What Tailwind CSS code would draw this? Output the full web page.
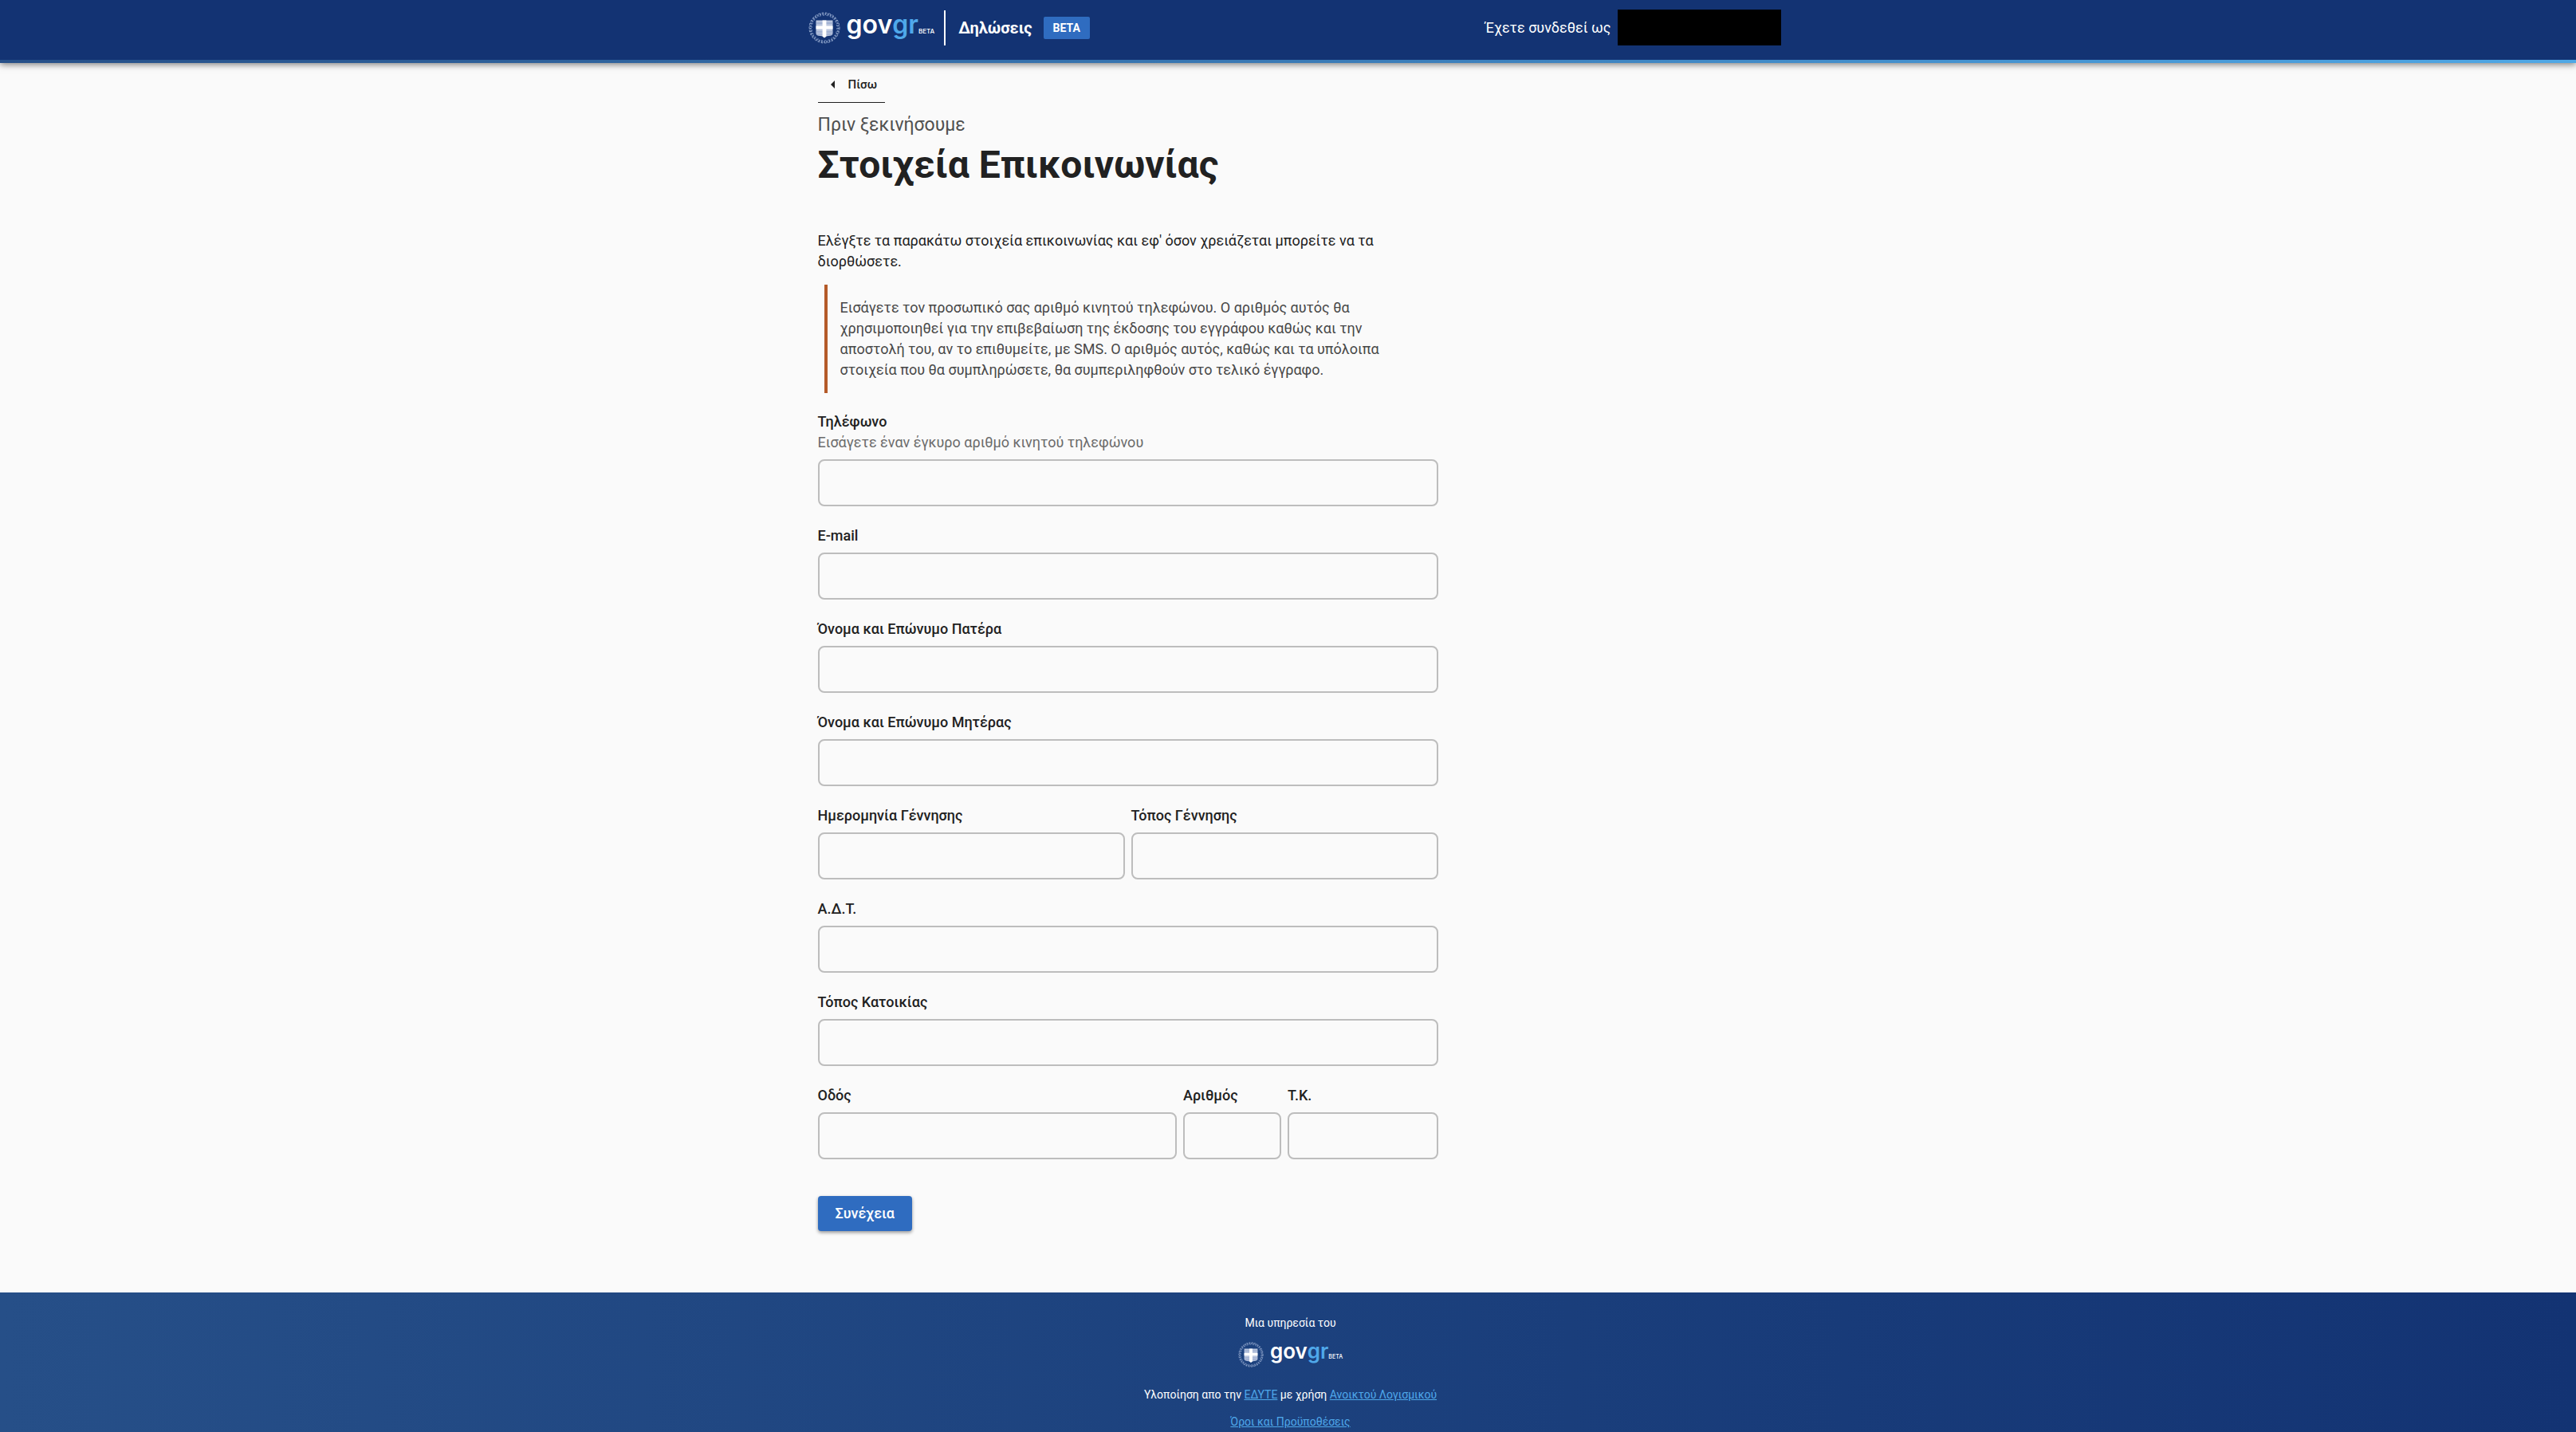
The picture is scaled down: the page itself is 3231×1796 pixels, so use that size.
<!DOCTYPE html>
<html lang="el">
<head>
<meta charset="utf-8">
<meta name="viewport" content="width=device-width, initial-scale=1">
<title>Στοιχεία Επικοινωνίας</title>
<script src="https://cdn.jsdelivr.net/npm/@tailwindcss/browser@4"></script>
</head>
<body class="flex min-h-screen flex-col bg-[#fafafa] font-['Roboto','Noto_Sans',sans-serif] text-lg leading-[26px] text-[#212121]">
<svg class="hidden" aria-hidden="true">
  <symbol id="emblem" viewBox="0 0 40 40">
    <circle cx="20" cy="20" r="17.5" fill="none" stroke="#7f96c0" stroke-width="2.600" stroke-dasharray="1.8 1.5"/>
    <circle cx="20" cy="20" r="19" fill="none" stroke="#8fa4ca" stroke-width="1" stroke-dasharray="2.500 2"/>
    <circle cx="20" cy="20" r="15.8" fill="none" stroke="#6f89b8" stroke-width="1" stroke-dasharray="2 2.500"/>
    <path d="M9.500 10.500h21V27c0 2-2 2.800-5 3l-3.500.5-2 1.500-2-1.500-3.500-.5c-3-.2-5-1-5-3z" fill="#b9c5de"/>
    <path d="M9.500 14h21M9.500 25h21M10 28h20" stroke="#8b9fc8" stroke-width="1"/>
    <path d="M17.600 10.500h4.800v7h8.100v4h-8.100v9.200L20 32.500l-2.400-1.800v-9.200H9.500v-4h8.100z" fill="#fff"/>
  </symbol>
</svg>

<header class="bg-[#133373] text-white shadow-[0_2px_8px_rgba(0,0,0,0.5)]">
  <div class="mx-auto flex h-[75px] max-w-[1236px] items-center justify-between pb-1.5 pl-4">
    <div class="flex items-center">
      <a href="#" class="flex items-center" aria-label="govgr BETA">
        <svg class="size-10" aria-hidden="true"><use href="#emblem"/></svg>
        <span class="ml-2 flex items-baseline pb-2 font-['Inter',sans-serif] text-[32px] leading-6 font-semibold">gov<span class="text-[#4fa8ea]">gr</span><span class="text-[8px] leading-none font-medium">BETA</span></span>
      </a>
      <span class="ml-3 h-11 w-0.5 bg-white"></span>
      <span class="ml-4 text-xl font-bold">Δηλώσεις</span>
      <span class="ml-3.5 rounded-xs bg-[#2f6cc0] px-3 text-sm leading-7 font-bold">BETA</span>
    </div>
    <div class="flex items-center gap-2">
      <span>Έχετε συνδεθεί ως</span>
      <span class="h-[45px] w-[205px] bg-black"></span>
    </div>
  </div>
  <div class="h-1 bg-linear-to-r from-[#264f88] to-[#4fa8e6]"></div>
</header>

<main class="mx-auto w-full max-w-[1236px] grow pb-[77px] pl-7">
  <div class="max-w-[778px]">
    <button type="button" class="flex h-[50px] items-center gap-4 border-b border-[#212121] pt-1 pr-2.5 pl-4 text-[15px] font-medium">
      <svg class="h-2.5 w-1.5" viewBox="0 0 6 10" aria-hidden="true"><path d="M5 0v10L0 5z" fill="currentColor"/></svg>
      Πίσω
    </button>
    <p class="mt-3 text-[23px] leading-8 text-[#505050]">Πριν ξεκινήσουμε</p>
    <h1 class="mt-1 text-5xl leading-[60px] font-bold">Στοιχεία Επικοινωνίας</h1>
    <p class="mt-[52px]">Ελέγξτε τα παρακάτω στοιχεία επικοινωνίας και εφ' όσον χρειάζεται μπορείτε να τα διορθώσετε.</p>
    <p class="mt-4 ml-2 border-l-4 border-[#b45a28] p-4 text-[#484848]">Εισάγετε τον προσωπικό σας αριθμό κινητού τηλεφώνου. Ο αριθμός αυτός θα χρησιμοποιηθεί για την επιβεβαίωση της έκδοσης του εγγράφου καθώς και την αποστολή του, αν το επιθυμείτε, με SMS. Ο αριθμός αυτός, καθώς και τα υπόλοιπα στοιχεία που θα συμπληρώσετε, θα συμπεριληφθούν στο τελικό έγγραφο.</p>

    <form class="mt-[23px]">
      <div class="grid grid-cols-12 gap-x-2 gap-y-6">
        <div class="col-span-12">
          <label for="phone" class="block font-medium">Τηλέφωνο</label>
          <p id="phone-hint" class="text-[#6b6b6b]">Εισάγετε έναν έγκυρο αριθμό κινητού τηλεφώνου</p>
          <input id="phone" type="tel" aria-describedby="phone-hint" class="mt-2 block h-[59px] w-full rounded-lg border-2 border-[#bdbdbd] px-4">
        </div>
        <div class="col-span-12">
          <label for="email" class="block font-medium">E-mail</label>
          <input id="email" type="email" class="mt-2 block h-[59px] w-full rounded-lg border-2 border-[#bdbdbd] px-4">
        </div>
        <div class="col-span-12">
          <label for="father" class="block font-medium">Όνομα και Επώνυμο Πατέρα</label>
          <input id="father" type="text" class="mt-2 block h-[59px] w-full rounded-lg border-2 border-[#bdbdbd] px-4">
        </div>
        <div class="col-span-12">
          <label for="mother" class="block font-medium">Όνομα και Επώνυμο Μητέρας</label>
          <input id="mother" type="text" class="mt-2 block h-[59px] w-full rounded-lg border-2 border-[#bdbdbd] px-4">
        </div>
        <div class="col-span-6">
          <label for="birthdate" class="block font-medium">Ημερομηνία Γέννησης</label>
          <input id="birthdate" type="text" class="mt-2 block h-[59px] w-full rounded-lg border-2 border-[#bdbdbd] px-4">
        </div>
        <div class="col-span-6">
          <label for="birthplace" class="block font-medium">Τόπος Γέννησης</label>
          <input id="birthplace" type="text" class="mt-2 block h-[59px] w-full rounded-lg border-2 border-[#bdbdbd] px-4">
        </div>
        <div class="col-span-12">
          <label for="idcard" class="block font-medium">Α.Δ.Τ.</label>
          <input id="idcard" type="text" class="mt-2 block h-[59px] w-full rounded-lg border-2 border-[#bdbdbd] px-4">
        </div>
        <div class="col-span-12">
          <label for="residence" class="block font-medium">Τόπος Κατοικίας</label>
          <input id="residence" type="text" class="mt-2 block h-[59px] w-full rounded-lg border-2 border-[#bdbdbd] px-4">
        </div>
        <div class="col-span-7">
          <label for="street" class="block font-medium">Οδός</label>
          <input id="street" type="text" class="mt-2 block h-[59px] w-full rounded-lg border-2 border-[#bdbdbd] px-4">
        </div>
        <div class="col-span-2">
          <label for="number" class="block font-medium">Αριθμός</label>
          <input id="number" type="text" class="mt-2 block h-[59px] w-full rounded-lg border-2 border-[#bdbdbd] px-4">
        </div>
        <div class="col-span-3">
          <label for="postcode" class="block font-medium">Τ.Κ.</label>
          <input id="postcode" type="text" class="mt-2 block h-[59px] w-full rounded-lg border-2 border-[#bdbdbd] px-4">
        </div>
      </div>
      <button type="submit" class="mt-[46px] h-11 rounded-sm bg-[#2f6cc0] px-[22px] font-medium text-white shadow-[0_2px_4px_rgba(0,0,0,0.4)]">Συνέχεια</button>
    </form>
  </div>
</main>

<footer class="flex flex-col items-center bg-linear-to-r from-[#264f88] to-[#133373] pt-7 pb-[3px] pl-1.5 text-sm text-white">
  <p>Μια υπηρεσία του</p>
  <a href="#" class="mt-3.5 flex items-center" aria-label="govgr BETA">
    <svg class="size-8" aria-hidden="true"><use href="#emblem"/></svg>
    <span class="ml-2 flex items-baseline pb-2 font-['Inter',sans-serif] text-[26px] leading-5 font-semibold">gov<span class="text-[#4fa8ea]">gr</span><span class="text-[7px] leading-none font-medium">BETA</span></span>
  </a>
  <p class="mt-6">Υλοποίηση απο την <a href="#" class="text-[#4fa8ea] underline">ΕΔΥΤΕ</a> με χρήση <a href="#" class="text-[#4fa8ea] underline">Ανοικτού Λογισμικού</a></p>
  <a href="#" class="mt-3.5 text-[#4fa8ea] underline">Όροι και Προϋποθέσεις</a>
</footer>
</body>
</html>
